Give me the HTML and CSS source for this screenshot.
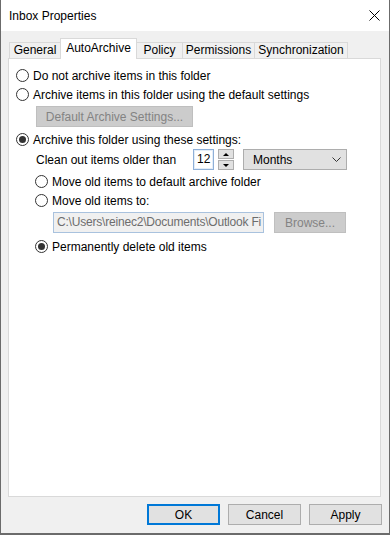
FILE: index.html
```html
<!DOCTYPE html>
<html lang="en">
<head>
<meta charset="UTF-8" />
<title>Inbox Properties</title>
<link rel="stylesheet" href="styles.css">
</head>
<body>

<div class="window">
  <!-- Title bar -->
  <div class="titlebar">
    <span class="title">Inbox Properties</span>
    <svg class="close" width="11" height="11" viewBox="0 0 11 11" aria-label="Close">
      <path d="M0.5 0.5 L10.5 10.5 M10.5 0.5 L0.5 10.5" stroke="#000" stroke-width="1" fill="none" />
    </svg>
  </div>

  <div class="dialog">
    <!-- Tabs -->
    <div class="tabs">
      <div class="tab tab-general">General</div>
      <div class="tab tab-auto active">AutoArchive</div>
      <div class="tab tab-policy">Policy</div>
      <div class="tab tab-perm">Permissions</div>
      <div class="tab tab-sync">Synchronization</div>
    </div>

    <!-- AutoArchive page -->
    <div class="panel">
      <div class="opt"><span class="radio"></span>Do not archive items in this folder</div>
      <div class="opt"><span class="radio"></span>Archive items in this folder using the default settings</div>
      <button class="btn btn-disabled btn-defaults">Default Archive Settings...</button>
      <div class="opt opt-gap"><span class="radio checked"></span>Archive this folder using these settings:</div>

      <div class="clean-row">
        <span class="clean-label">Clean out items older than</span>
        <span class="num-input">12</span>
        <span class="spinner">
          <span class="spin-btn"><span class="arrow up"></span></span>
          <span class="spin-btn"><span class="arrow down"></span></span>
        </span>
        <span class="select">
          Months
          <svg class="chevron" width="9" height="5" viewBox="0 0 9 5">
            <path d="M0.5 0.5 L4.5 4.5 L8.5 0.5" stroke="#333" stroke-width="1" fill="none" />
          </svg>
        </span>
      </div>

      <div class="opt sub opt-gap2"><span class="radio"></span>Move old items to default archive folder</div>
      <div class="opt sub"><span class="radio"></span>Move old items to:</div>

      <div class="path-row">
        <span class="path-input">C:\Users\reinec2\Documents\Outlook Fi</span>
        <button class="btn btn-disabled btn-browse">Browse...</button>
      </div>

      <div class="opt sub opt-gap4"><span class="radio checked"></span>Permanently delete old items</div>
    </div>

    <!-- Dialog buttons -->
    <div class="footer">
      <button class="btn btn-ok">OK</button>
      <button class="btn">Cancel</button>
      <button class="btn">Apply</button>
    </div>
  </div>
</div>

</body>
</html>
```

FILE: styles.css
```css
/* Reset */
*, *::before, *::after {
  box-sizing: border-box;
}
body {
  margin: 0;
  background: #5a5a5a;
  font-family: 'Liberation Sans', Arial, sans-serif;
  font-size: 12px;
  color: #000;
}
button {
  font-family: inherit;
  font-size: 12px;
  margin: 0;
  padding: 0;
}

/* Window */
.window {
  width: 390px;
  height: 535px;
  display: flex;
  flex-direction: column;
  background: #f0f0f0;
  border: 1px solid #6b6b6b;
  border-top: none;
  border-bottom-width: 2px;
}
.titlebar {
  height: 31px;
  background: #fff;
  display: flex;
  align-items: center;
  justify-content: space-between;
  padding: 0 9px 0 8px;
}
.title {
  color: #000;
}
.close {
  display: block;
}

.dialog {
  flex: 1;
  display: flex;
  flex-direction: column;
}

/* Tabs */
.tabs {
  display: flex;
  align-items: flex-end;
  height: 20px;
  margin: 7px 0 0 8px;
}
.tab {
  height: 16px;
  border: 1px solid #d9d9d9;
  border-bottom: none;
  background: #f0f0f0;
  margin-left: -1px;
  text-align: center;
  line-height: 15px;
}
.tab:first-child {
  margin-left: 0;
}
.tab.active {
  height: 21px;
  margin-bottom: -1px;
  background: #fff;
  position: relative;
  z-index: 1;
  line-height: 18px;
}
.tab-general { width: 52px; }
.tab-auto { width: 77px; }
.tab-policy { width: 47px; }
.tab-perm { width: 73px; }
.tab-sync { width: 94px; }

/* Panel */
.panel {
  width: 373px;
  height: 439px;
  margin-left: 7px;
  background: #fff;
  border: 1px solid #d9d9d9;
  padding: 7px 0 0 7px;
  display: flex;
  flex-direction: column;
  align-items: flex-start;
}
.opt {
  height: 19px;
  display: flex;
  align-items: center;
  gap: 4px;
  white-space: nowrap;
}
.opt.sub {
  margin-left: 19px;
}
.opt-gap { margin-top: 3px; }
.opt-gap2 { margin-top: 2px; }
.opt-gap4 { margin-top: 4px; }

.radio {
  width: 13px;
  height: 13px;
  border: 1px solid #333;
  border-radius: 50%;
  background: #fff;
  display: flex;
  align-items: center;
  justify-content: center;
  flex-shrink: 0;
}
.radio.checked::after {
  content: "";
  width: 7px;
  height: 7px;
  border-radius: 50%;
  background: #333;
}

/* Buttons */
.btn {
  height: 21px;
  background: #e1e1e1;
  border: 1px solid #adadad;
  color: #000;
  text-align: center;
}
.btn-disabled {
  background: #cccccc;
  border-color: #bfbfbf;
  color: #838383;
}
.btn-defaults {
  width: 157px;
  margin: 2px 0 0 20px;
}
.btn-browse {
  width: 72px;
}

/* Clean out row */
.clean-row {
  display: flex;
  align-items: center;
  height: 21px;
  margin-left: 20px;
}
.clean-label {
  width: 157px;
}
.num-input {
  width: 21px;
  height: 21px;
  border: 1px solid #8fb0d8;
  box-shadow: inset 0 0 0 1px #e3edf8;
  background: #fff;
  padding-left: 3px;
  line-height: 19px;
}
.spinner {
  width: 16px;
  height: 21px;
  margin-left: 4px;
  display: flex;
  flex-direction: column;
  justify-content: space-between;
}
.spin-btn {
  height: 10px;
  background: #e1e1e1;
  border: 1px solid #adadad;
  display: flex;
  align-items: center;
  justify-content: center;
}
.arrow {
  width: 0;
  height: 0;
  border-left: 3px solid transparent;
  border-right: 3px solid transparent;
}
.arrow.up {
  border-bottom: 3px solid #000;
}
.arrow.down {
  border-top: 3px solid #000;
}
.select {
  width: 104px;
  height: 21px;
  margin-left: 9px;
  background: #e1e1e1;
  border: 1px solid #adadad;
  display: flex;
  align-items: center;
  justify-content: space-between;
  padding: 0 5px 0 9px;
}

/* Path row */
.path-row {
  display: flex;
  align-items: center;
  gap: 10px;
  height: 21px;
  margin: 2px 0 0 37px;
}
.path-input {
  width: 211px;
  height: 21px;
  border: 1px solid #a9c2de;
  background: #f0f0f0;
  color: #6d6d6d;
  padding-left: 3px;
  line-height: 19px;
  letter-spacing: -0.2px;
  white-space: nowrap;
  overflow: hidden;
}

/* Footer */
.footer {
  display: flex;
  justify-content: flex-end;
  gap: 8px;
  padding: 7px 7px 0 0;
}
.footer .btn {
  width: 73px;
}
.btn-ok {
  border: 2px solid #0078d7;
}
```
